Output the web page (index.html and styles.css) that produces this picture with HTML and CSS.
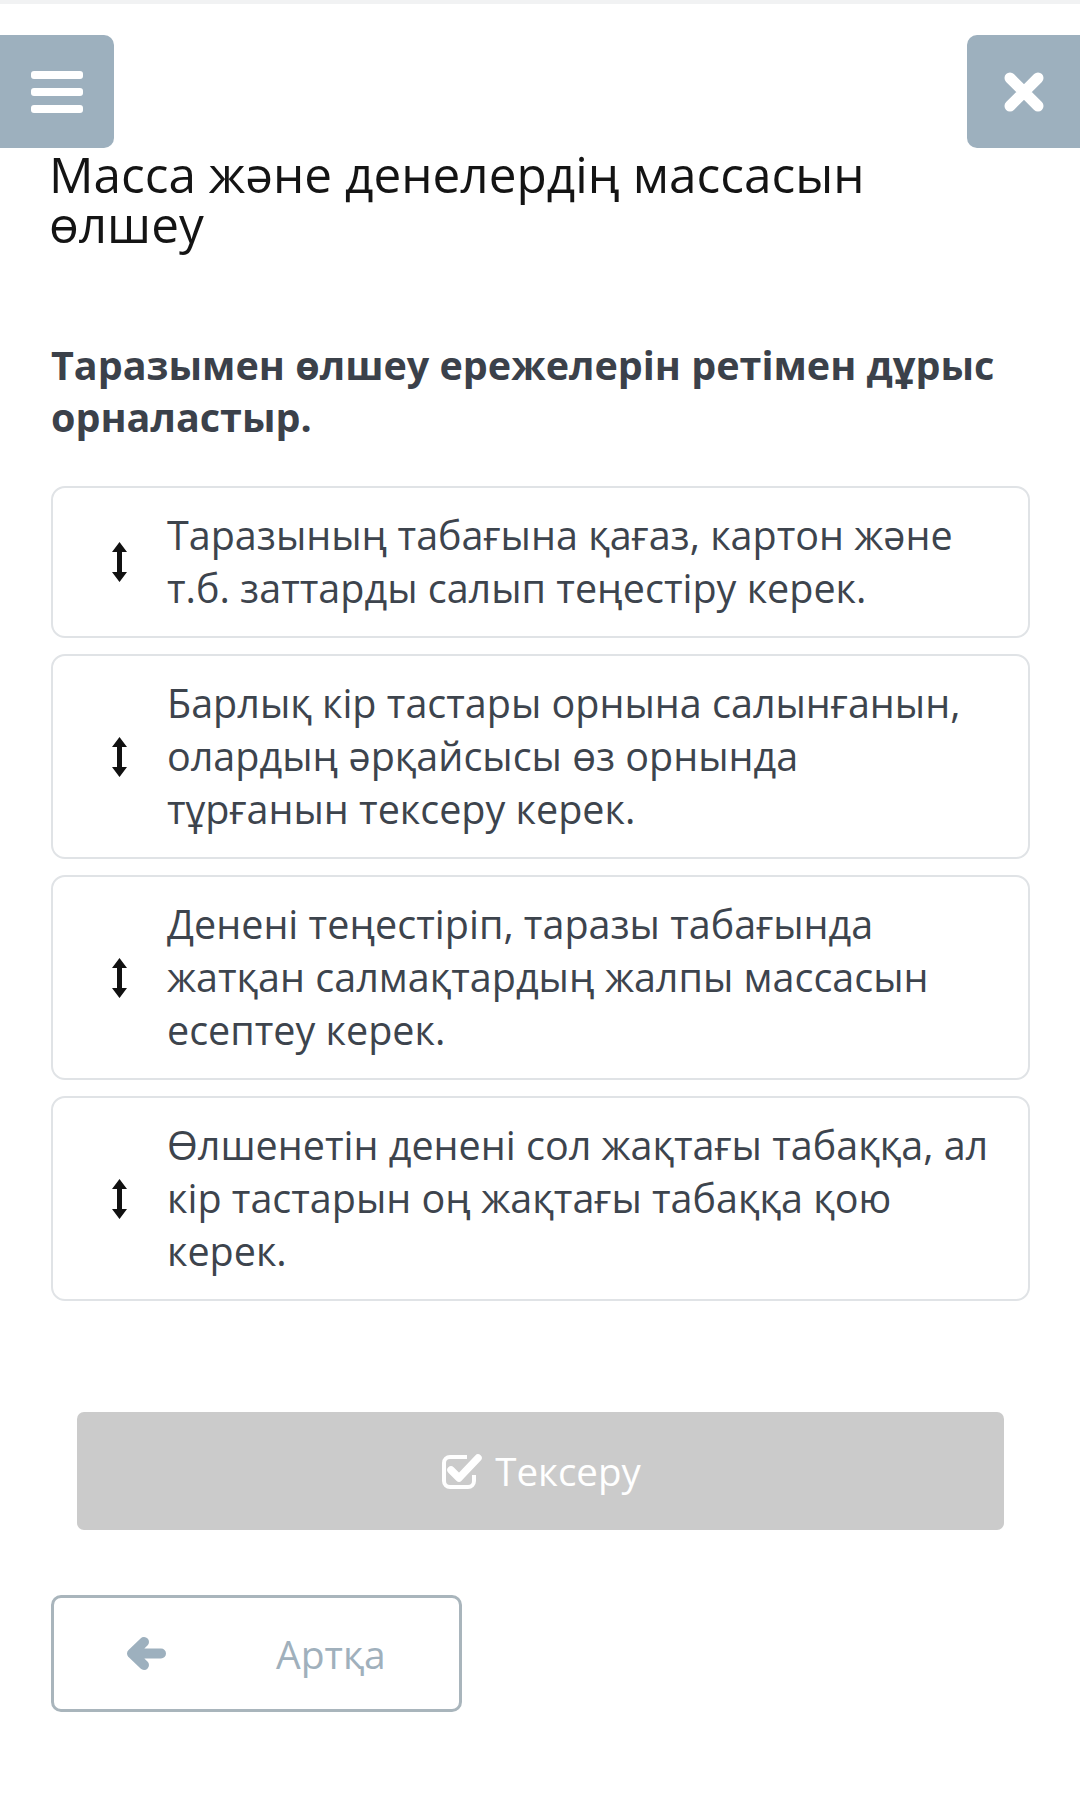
FILE: index.html
```html
<!DOCTYPE html>
<html lang="kk">
<head>
<meta charset="utf-8">
<link rel="stylesheet" href="styles.css">
</head>
<body>
<div class="topstrip"></div>
<header class="header">
  <button class="hbtn menu" aria-label="menu">
    <svg width="52" height="42" viewBox="0 0 52 42"><rect x="0" y="0" width="52" height="8" rx="3" fill="#fff"/><rect x="0" y="17" width="52" height="8" rx="3" fill="#fff"/><rect x="0" y="34" width="52" height="8" rx="3" fill="#fff"/></svg>
  </button>
  <button class="hbtn close" aria-label="close">
    <svg width="42" height="42" viewBox="0 0 42 42"><path d="M7 7 L35 35 M35 7 L7 35" stroke="#fff" stroke-width="11" stroke-linecap="round"/></svg>
  </button>
</header>
<main class="content">
  <h1 class="title">Масса және денелердің массасын өлшеу</h1>
  <h2 class="question">Таразымен өлшеу ережелерін ретімен дұрыс орналастыр.</h2>
  <ul class="items">
    <li class="item"><span class="handle"><svg width="15" height="40" viewBox="0 0 15 40"><path d="M7.5 0 L15 10 L10 10 L10 30 L15 30 L7.5 40 L0 30 L5 30 L5 10 L0 10 Z" fill="#111"/></svg></span><span class="itext">Таразының табағына қағаз, картон және т.б. заттарды салып теңестіру керек.</span></li>
    <li class="item"><span class="handle"><svg width="15" height="40" viewBox="0 0 15 40"><path d="M7.5 0 L15 10 L10 10 L10 30 L15 30 L7.5 40 L0 30 L5 30 L5 10 L0 10 Z" fill="#111"/></svg></span><span class="itext">Барлық кір тастары орнына салынғанын, олардың әрқайсысы өз орнында<br>тұрғанын тексеру керек.</span></li>
    <li class="item"><span class="handle"><svg width="15" height="40" viewBox="0 0 15 40"><path d="M7.5 0 L15 10 L10 10 L10 30 L15 30 L7.5 40 L0 30 L5 30 L5 10 L0 10 Z" fill="#111"/></svg></span><span class="itext">Денені теңестіріп, таразы табағында жатқан салмақтардың жалпы массасын есептеу керек.</span></li>
    <li class="item"><span class="handle"><svg width="15" height="40" viewBox="0 0 15 40"><path d="M7.5 0 L15 10 L10 10 L10 30 L15 30 L7.5 40 L0 30 L5 30 L5 10 L0 10 Z" fill="#111"/></svg></span><span class="itext">Өлшенетін денені сол жақтағы табаққа, ал кір тастарын оң жақтағы табаққа қою керек.</span></li>
  </ul>
  <button class="check">
    <svg width="42" height="39" viewBox="0 0 42 39"><path d="M27 5 H10 A6 6 0 0 0 4 11 V29 A6 6 0 0 0 10 35 H28 A6 6 0 0 0 34 29 V23" fill="none" stroke="#fff" stroke-width="4"/><path d="M11 18 L19 26 L38 6" fill="none" stroke="#fff" stroke-width="7.5" stroke-linecap="round" stroke-linejoin="round"/></svg>
    <span>Тексеру</span>
  </button>
  <button class="back">
    <svg width="40" height="33" viewBox="0 0 40 33"><path d="M35 16.5 H8 M18 5 L6 16.5 L18 28" fill="none" stroke="#9db0be" stroke-width="10" stroke-linecap="round" stroke-linejoin="round"/></svg>
    <span>Артқа</span>
  </button>
</main>
</body>
</html>
```
FILE: styles.css
```css
html, body {
  margin: 0;
  padding: 0;
  background: #fff;
}
body {
  font-family: "Open Sans", "Noto Sans", sans-serif;
  overflow-x: hidden;
  width: 1080px;
}
.topstrip {
  height: 4px;
  background: #f1f2f3;
}
.header {
  display: flex;
  justify-content: space-between;
  margin-top: 31px;
  height: 113px;
}
.hbtn {
  border: none;
  background: #9db0be;
  border-radius: 10px;
  height: 113px;
  display: flex;
  align-items: center;
  justify-content: center;
  padding: 0;
  flex-shrink: 0;
}
.menu {
  width: 124px;
  margin-left: -10px;
  padding-left: 10px;
}
.close {
  width: 123px;
  margin-right: -10px;
  padding-right: 10px;
}
.content {
  padding: 0 50px 0 51px;
}
.title {
  margin: 1px 0 0 -2px;
  font-size: 49.5px;
  line-height: 50px;
  font-weight: 400;
  color: #141414;
}
.question {
  margin: 90px 0 0 0;
  font-size: 39.5px;
  line-height: 52px;
  font-weight: 700;
  color: #3b414a;
}
.items {
  list-style: none;
  margin: 43px 0 0 0;
  padding: 0;
  display: flex;
  flex-direction: column;
  gap: 16px;
}
.item {
  display: flex;
  align-items: center;
  border: 2px solid #e0e3e6;
  border-radius: 14px;
  padding: 21px 36px 21px 0;
}
.handle {
  width: 114px;
  flex-shrink: 0;
  display: flex;
  justify-content: flex-start;
  padding-left: 59px;
  box-sizing: border-box;
}
.handle svg { display: block; }
.itext {
  flex: 1;
  font-size: 39.5px;
  line-height: 53px;
  color: #3d444d;
}
.check {
  margin: 111px 0 0 26px;
  width: 927px;
  height: 118px;
  border: none;
  border-radius: 7px;
  background: #cbcbcb;
  display: flex;
  align-items: center;
  justify-content: center;
  gap: 13px;
  font-family: "Open Sans", "Noto Sans", sans-serif;
  font-size: 38.5px;
  color: #fff;
  padding: 0;
}
.check svg { display: block; }
.back {
  margin-top: 65px;
  width: 411px;
  height: 117px;
  border: 3px solid #a9b5bc;
  border-radius: 10px;
  background: #fff;
  display: flex;
  align-items: center;
  padding: 0 0 0 72px;
  font-family: "Open Sans", "Noto Sans", sans-serif;
  font-size: 39px;
  color: #a0b0bc;
}
.back svg { display: block; }
.back span {
  margin-left: 110px;
}
```
